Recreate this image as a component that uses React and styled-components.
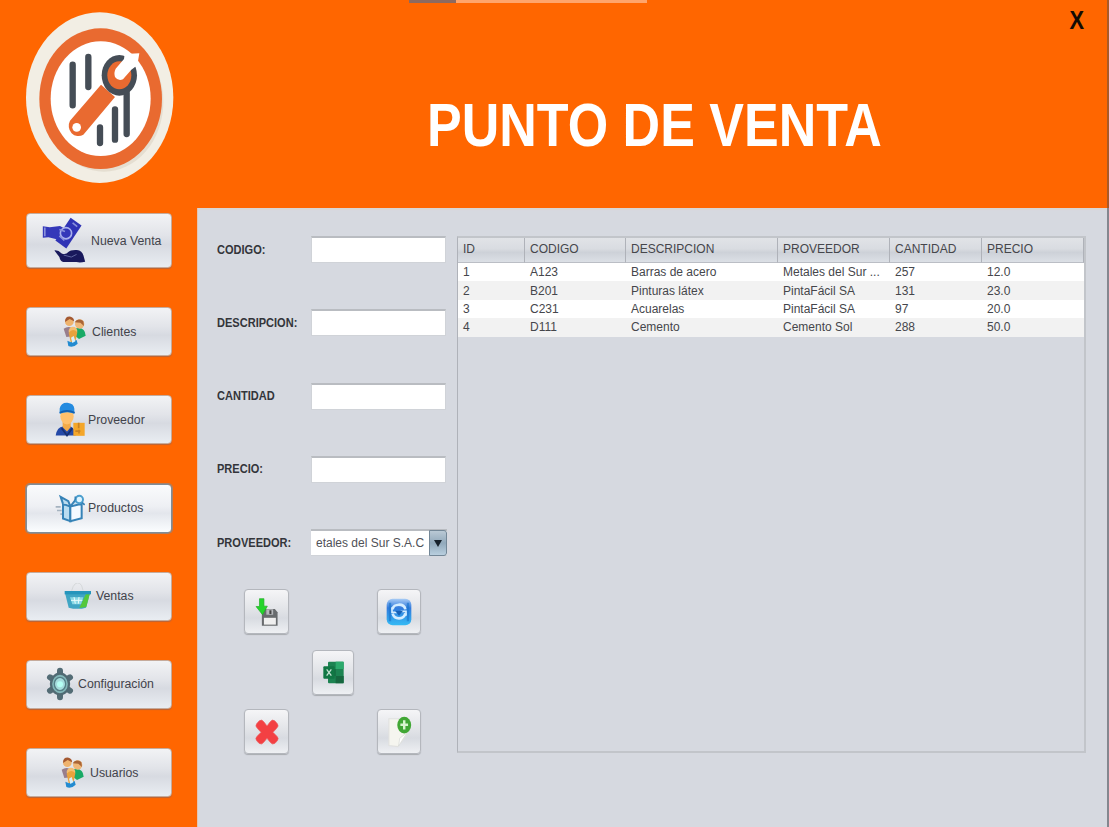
import React from "react";
import styled, { createGlobalStyle } from "styled-components";

const Global = createGlobalStyle`
  * { box-sizing: border-box; }
  body { margin: 0; overflow: hidden; font-family: "Liberation Sans", Arial, sans-serif; }
`;

const Window = styled.div`
  display: flex;
  flex-direction: column;
  width: 1109px;
  height: 827px;
  padding-right: 2px;
  background: linear-gradient(#a85a28 208px, #84878f 208px) right / 2px 100% no-repeat, #ff6600;
`;
const Header = styled.header`
  position: relative;
  display: flex;
  flex: none;
  height: 208px;
`;
const BackgroundTabs = styled.div`
  position: absolute;
  top: 0;
  left: 409px;
  width: 238px;
  height: 3px;
  background: linear-gradient(90deg, #8c6a60 47px, #ffa56b 47px);
`;
const LogoBox = styled.div`
  width: 197px;
  padding: 11px 0 0 24px;
`;
const TitleArea = styled.div`
  flex: 1;
  padding: 89px 0 0 230px;
`;
const Title = styled.h1`
  margin: 0;
  width: max-content;
  font-size: 62px;
  line-height: 72px;
  font-weight: 700;
  color: #fff;
  white-space: nowrap;
  transform: scaleX(0.839);
  transform-origin: left;
`;
const Close = styled.button`
  position: absolute;
  top: 6px;
  right: 22px;
  padding: 0;
  border: 0;
  background: none;
  color: #140b04;
  font: 700 26px/29px "Liberation Sans", sans-serif;
  transform: scaleX(0.84);
`;
const Body = styled.div`
  display: flex;
  flex: 1;
  min-height: 0;
`;
const Sidebar = styled.nav`
  display: flex;
  flex-direction: column;
  gap: 39.2px;
  width: 197px;
  padding: 5px 0 0 26px;
`;
const MenuButton = styled.button`
  display: flex;
  flex: none;
  align-items: center;
  gap: ${(p) => p.$gap}px;
  width: 146px;
  height: ${(p) => (p.$tall ? 55 : 49)}px;
  padding: 0 0 0 ${(p) => p.$start}px;
  border: 1px solid ${(p) => (p.$active ? "#7f8d98" : "#c5ab9c")};
  border-radius: 4px;
  box-shadow: ${(p) => (p.$active ? "0 0 0 1px #a5806a" : "0 1px 1px #b8653a")};
  background: ${(p) =>
    p.$active
      ? "linear-gradient(#fafbfc, #eef0f4 45%, #e3e6ec 60%, #fbfdff)"
      : "linear-gradient(#f2f3f5, #e2e4e9 40%, #d7dae1 58%, #e9edf2)"};
  color: #42434b;
  font: 12.3px "Liberation Sans", sans-serif;
  white-space: nowrap;
  svg { flex: none; }
`;
const Panel = styled.main`
  display: flex;
  flex: 1;
  gap: 11px;
  padding: 28px 0 0 20px;
  background: #d6d9e0;
  box-shadow: inset 0 2px 1px #d9d6d4;
  border-left: 1px solid #e2c5b4;
`;
const Form = styled.form`
  width: 229px;
  margin-left: -1px;
`;
const Field = styled.label`
  display: flex;
  align-items: center;
  justify-content: space-between;
  height: 27px;
  margin-bottom: 46.3px;
`;
const FieldName = styled.span`
  width: 94px;
  font-size: 12px;
  font-weight: 700;
  color: #33353a;
  white-space: nowrap;
  span {
    display: inline-block;
    transform: scaleX(0.92);
    transform-origin: left;
  }
`;
const Input = styled.input`
  width: 135px;
  height: 27px;
  padding: 0;
  border: 1px solid #d0d3d8;
  border-top: 2px solid #b9bcc1;
  background: #fff;
`;
const Select = styled.div`
  display: flex;
  width: 136px;
  height: 27px;
  margin-right: -1px;
  border-top: 2px solid #b9bcc1;
  border-bottom: 1px solid #d0d3d8;
  background: #fff;
  color: #505157;
  font-size: 12px;
  line-height: 24px;
  white-space: nowrap;
`;
const Value = styled.span`
  flex: 1;
  padding-left: 5px;
`;
const Arrow = styled.span`
  display: flex;
  align-items: center;
  justify-content: center;
  width: 18px;
  height: 26px;
  margin-top: -1px;
  border: 1px solid #738797;
  border-radius: 0 3px 3px 0;
  background: linear-gradient(#bac9d5, #91a9bb 50%, #b9cfdf);
`;
const Actions = styled.div`
  display: grid;
  grid-template: 45px 47px 45px / 45px 42px 44px;
  column-gap: 23px;
  row-gap: 14px;
  align-items: end;
  margin: -13px 0 0 27px;
`;
const Action = styled.button`
  grid-area: ${(p) => p.$area};
  display: flex;
  align-items: center;
  justify-content: center;
  height: 45px;
  padding: 0;
  border: 1px solid #b4b7bd;
  border-radius: 4px;
  box-shadow: 0 1px 1px #a8abb0;
  background: linear-gradient(#f5f5f7, #e2e4e8 45%, #d8dbe1 65%, #eef0f3);
`;
const TableBox = styled.div`
  width: 629px;
  height: 517px;
  border: 2px solid #c2c5ca;
  border-left: 1px solid #afb2b9;
`;
const Table = styled.table`
  width: 100%;
  table-layout: fixed;
  border-collapse: separate;
  border-spacing: 0;
  font-size: 12px;
  color: #45464b;
`;
const HeadCell = styled.th`
  width: ${(p) => p.$w}px;
  height: 25px;
  padding: 0 0 2px 5px;
  border-right: 1px solid #afb2b9;
  border-bottom: 1px solid #bbbec5;
  background: linear-gradient(#e1e3e7, #d9dce1 45%, #cdd1d8 60%, #dce0e6);
  font-weight: 400;
  text-align: left;
`;
const Row = styled.tr`
  background: #fff;
  &:nth-child(even) { background: #f2f2f2; }
`;
const Cell = styled.td`
  height: 18.4px;
  padding: 0 0 0 5px;
  line-height: 18px;
  white-space: nowrap;
`;

const Logo = () => (
  <svg width="151" height="174" viewBox="72 33 453 522">
    <ellipse cx="299" cy="293" rx="221" ry="256" fill="#f2eee4" />
    <ellipse cx="312" cy="306" rx="178" ry="209" fill="#ddd5c6" opacity=".65" />
    <ellipse cx="302" cy="296" rx="184" ry="211" fill="#e96a30" />
    <ellipse cx="302" cy="296" rx="150" ry="172" fill="#fff" />
    <g stroke="#454d56" strokeWidth="19" strokeLinecap="round">
      <path d="M218 194V316M265 171V261M300 382V429M345 328V419M380 278V402" />
    </g>
    <path d="M303 254L345 291L250 404A29 31 0 0 1 210 362Z" fill="#e96a30" />
    <circle cx="230" cy="382" r="13" fill="#fff" />
    <ellipse cx="358" cy="226" rx="53" ry="61" fill="#454d56" />
    <ellipse cx="358" cy="226" rx="36" ry="42" fill="#e96a30" />
    <path d="M374 162L372 177L347 206Q341 217 345 231Q355 245 369 238L394 209L412 196L418 160Z" fill="#fff" />
  </svg>
);
const SaleIcon = () => (
  <svg width="44" height="47" viewBox="126 48 132 142">
    <path d="M212 50L245 74L199 143L166 119Z" fill="#3034b5" />
    <path d="M128 76L149 79L180 75L214 94L205 114L184 109L170 115L145 109L128 111Z" fill="#3438b9" />
    <circle cx="198" cy="97" r="17" fill="none" stroke="#aab1ed" strokeWidth="5" />
    <path d="M134 80V106M178 86L195 92M178 105L193 119M218 66L232 77" stroke="#8991dc" strokeWidth="5" />
    <path d="M163 149Q174 147 185 158Q197 163 205 154Q211 147 231 148Q247 150 251 165L256 183Q240 187 230 184L190 184Q181 182 178 169Z" fill="#19195c" />
    <path d="M191 163L214 169L230 161" fill="none" stroke="#6067a0" strokeWidth="3" />
  </svg>
);
const PeopleIcon = () => (
  <svg width="23" height="32" viewBox="188 345 69 96">
    <path d="M190 383Q208 370 225 389V405L198 408Z" fill="#987e8c" />
    <path d="M226 382Q254 376 256 404L236 414L222 403Z" fill="#19aa66" />
    <circle cx="207" cy="362" r="13" fill="#efb36d" /><path d="M194 363Q194 345 211 347Q222 350 221 361L208 354Z" fill="#a45931" />
    <circle cx="238" cy="369" r="14" fill="#efb777" /><path d="M223 364Q231 350 249 360L251 375L240 365Z" fill="#a96537" />
    <circle cx="218" cy="390" r="13" fill="#f4be70" /><path d="M205 395Q218 380 231 394L225 423H211Z" fill="#e9a23c" />
    <path d="M201 419L212 424L229 417L232 428Q218 442 204 435Z" fill="#238bd0" />
    <path d="M212 410L220 405L225 421L216 426Z" fill="#d8eff9" />
  </svg>
);
const SupplierIcon = () => (
  <svg width="30" height="35" viewBox="164 64 90 104">
    <path d="M166 164Q170 139 188 137H211Q224 143 226 164Z" fill="#2449a7" />
    <path d="M187 121H211V139L200 152L187 139Z" fill="#f3aa47" />
    <ellipse cx="200" cy="106" rx="20" ry="25" fill="#ffc06b" />
    <path d="M178 99V83Q182 65 201 66Q221 68 222 84V99Q202 89 178 99Z" fill="#248be0" />
    <path d="M178 96Q200 84 223 96" fill="none" stroke="#135faf" strokeWidth="5" />
    <path d="M184 142L200 164L216 142" fill="none" stroke="#163071" strokeWidth="5" />
    <path d="M219 126H253V165H219Z" fill="#f4a629" /><path d="M235 126V142M225 151H240M236 147V158" stroke="#c98222" strokeWidth="5" />
  </svg>
);
const ProductIcon = () => (
  <svg width="30" height="29" viewBox="164 342 90 86">
    <path d="M166 380H181M170 391H184M180 402H189" stroke="#a5b3c0" strokeWidth="5" />
    <path d="M188 371L210 379V423L188 415Z" fill="#b9dcf0" stroke="#3683b7" strokeWidth="6" />
    <path d="M210 379L244 371V414L210 423Z" fill="#f4faff" stroke="#3683b7" strokeWidth="6" />
    <path d="M188 371L181 350L204 363L210 379L224 361L244 371" fill="#b9dcf0" stroke="#3683b7" strokeWidth="6" />
    <circle cx="237" cy="358" r="11" fill="#def4ff" stroke="#4c9fce" strokeWidth="6" />
    <path d="M225 360V349M245 367L253 374" stroke="#3683b7" strokeWidth="5" />
  </svg>
);
const BasketIcon = () => (
  <svg width="27" height="26" viewBox="191 68 81 78">
    <path d="M214 91Q222 62 238 69Q245 73 248 90" fill="none" stroke="#d5d8da" strokeWidth="3" />
    <path d="M194 98H269L257 142Q232 149 205 142Z" fill="#40a5c4" />
    <path d="M257 100L269 98L258 140L237 143Z" fill="#54c83c" />
    <path d="M193 92H272V102H193Z" fill="#2595bc" />
    <path d="M209 111H249L242 132H216Z" fill="#8bd9e5" /><path d="M221 110L225 130M236 110L234 130M212 120H246" stroke="#eafcfc" strokeWidth="3" />
  </svg>
);
const GearIcon = () => (
  <svg width="28" height="34" viewBox="136 319 84 102">
    <g stroke="#536c75" strokeWidth="18" strokeLinecap="round">
      <path d="M178 330V410M148 350L208 390M148 390L208 350" />
    </g>
    <ellipse cx="178" cy="370" rx="27" ry="31" fill="#83b8b9" stroke="#506a73" strokeWidth="7" />
    <ellipse cx="178" cy="370" rx="17" ry="20" fill="#a6dddd" stroke="#557f86" strokeWidth="4" />
    <circle cx="178" cy="371" r="9" fill="#b5fff4" />
  </svg>
);
const SaveIcon = () => (
  <svg width="24" height="28" viewBox="78 55 66 82">
    <path d="M96 87H134L142 97V136H96Z" fill="#686b6e" /><path d="M109 88H129V104H109Z" fill="#b5b7bb" />
    <path d="M102 113H137V133H102Z" fill="#efefef" /><path d="M121 91V102" stroke="#444" strokeWidth="6" />
    <path d="M89 57H102V79H112L98 104L79 80H89Z" fill="#24d52b" stroke="#20ac27" strokeWidth="2" />
  </svg>
);
const UpdateIcon = () => (
  <svg width="26" height="28" viewBox="0 0 78 84">
    <defs><linearGradient id="blueTile" x1="0" y1="0" x2="0" y2="1"><stop stopColor="#a9ccf5" /><stop offset=".35" stopColor="#327bdd" /><stop offset="1" stopColor="#34baf4" /></linearGradient></defs>
    <rect x="2" y="2" width="74" height="80" rx="18" fill="url(#blueTile)" />
    <path d="M12 14V70M66 14V70" stroke="#1975cc" strokeWidth="7" opacity=".65" />
    <path d="M20 34C21 16 55 15 58 34M58 46C54 66 25 66 20 47" fill="none" stroke="#d4edff" strokeWidth="8" />
    <path d="M18 28V43H34M60 53V40H44" fill="none" stroke="#d4edff" strokeWidth="5" />
    <path d="M27 38H51L39 53Z" fill="#1561b7" />
  </svg>
);
const ExcelIcon = () => (
  <svg width="21" height="23" viewBox="0 0 63 69">
    <rect x="15" y="2" width="47" height="65" rx="3" fill="#1c8351" />
    <path d="M38 2H62V24H38Z" fill="#2caa6c" /><path d="M15 24H38V45H15ZM38 45H62V67H38Z" fill="#16673f" />
    <rect x="1" y="16" width="34" height="37" rx="3" fill="#117744" />
    <path d="M11 25L25 44M25 25L11 44" stroke="#c3e1d1" strokeWidth="4" />
  </svg>
);
const DeleteIcon = () => (
  <svg width="24" height="28" viewBox="0 0 72 84">
    <path d="M12 9Q20 2 27 12L36 24L45 12Q52 2 60 9L67 17Q73 24 64 32L54 43L65 54Q73 61 67 68L60 76Q52 82 45 72L36 61L27 72Q20 82 12 76L5 68Q-1 61 7 54L18 43L8 32Q-1 24 5 17Z" fill="#f34043" stroke="#ec6264" strokeWidth="2" />
  </svg>
);
const NewIcon = () => (
  <svg width="28" height="32" viewBox="472 400 78 92">
    <path d="M482 408H522L535 450L508 488L482 485Z" fill="#f5f5ef" stroke="#e0e1df" strokeWidth="3" />
    <path d="M510 486L513 464L534 448Z" fill="#fff" stroke="#d7d9d6" strokeWidth="2" />
    <ellipse cx="526" cy="426" rx="20" ry="24" fill="#41a735" /><path d="M526 412V439M515 425H537" stroke="#d8f5cf" strokeWidth="7" />
  </svg>
);

const menu = [
  { name: "Nueva Venta", icon: SaleIcon, start: 15, gap: 5, tall: true },
  { name: "Clientes", icon: PeopleIcon, start: 36, gap: 6 },
  { name: "Proveedor", icon: SupplierIcon, start: 28, gap: 3 },
  { name: "Productos", icon: ProductIcon, start: 28, gap: 3, active: true },
  { name: "Ventas", icon: BasketIcon, start: 37, gap: 5 },
  { name: "Configuración", icon: GearIcon, start: 19, gap: 4 },
  { name: "Usuarios", icon: PeopleIcon, start: 34, gap: 6 },
];
const fields = ["CODIGO:", "DESCRIPCION:", "CANTIDAD", "PRECIO:"];
const columns = [["ID", 67], ["CODIGO", 101], ["DESCRIPCION", 152], ["PROVEEDOR", 112], ["CANTIDAD", 92], ["PRECIO", 102]];
const rows = [
  ["1", "A123", "Barras de acero", "Metales del Sur ...", "257", "12.0"],
  ["2", "B201", "Pinturas látex", "PintaFácil SA", "131", "23.0"],
  ["3", "C231", "Acuarelas", "PintaFácil SA", "97", "20.0"],
  ["4", "D111", "Cemento", "Cemento Sol", "288", "50.0"],
];

export default function App() {
  return (
    <Window>
      <Global />
      <Header>
        <BackgroundTabs />
        <LogoBox><Logo /></LogoBox>
        <TitleArea><Title>PUNTO DE VENTA</Title></TitleArea>
        <Close>X</Close>
      </Header>
      <Body>
        <Sidebar>
          {menu.map(({ name, icon: Icon, start, gap, tall, active }) => (
            <MenuButton key={name} $start={start} $gap={gap} $tall={tall} $active={active}><Icon />{name}</MenuButton>
          ))}
        </Sidebar>
        <Panel>
          <Form>
            {fields.map((name) => (
              <Field key={name}><FieldName><span>{name}</span></FieldName><Input /></Field>
            ))}
            <Field as="div">
              <FieldName><span>PROVEEDOR:</span></FieldName>
              <Select>
                <Value>etales del Sur S.A.C</Value>
                <Arrow><svg width="8" height="7" viewBox="0 0 8 7"><path d="M0 0H8L4 7Z" fill="#17222c" /></svg></Arrow>
              </Select>
            </Field>
            <Actions>
              <Action type="button" $area="1 / 1" aria-label="Guardar"><SaveIcon /></Action>
              <Action type="button" $area="1 / 3" aria-label="Actualizar"><UpdateIcon /></Action>
              <Action type="button" $area="2 / 2" aria-label="Excel"><ExcelIcon /></Action>
              <Action type="button" $area="3 / 1" aria-label="Eliminar"><DeleteIcon /></Action>
              <Action type="button" $area="3 / 3" aria-label="Nuevo"><NewIcon /></Action>
            </Actions>
          </Form>
          <TableBox>
            <Table>
              <thead><tr>{columns.map(([name, w]) => <HeadCell key={name} $w={w}>{name}</HeadCell>)}</tr></thead>
              <tbody>{rows.map((row) => <Row key={row[0]}>{row.map((value, i) => <Cell key={i}>{value}</Cell>)}</Row>)}</tbody>
            </Table>
          </TableBox>
        </Panel>
      </Body>
    </Window>
  );
}
